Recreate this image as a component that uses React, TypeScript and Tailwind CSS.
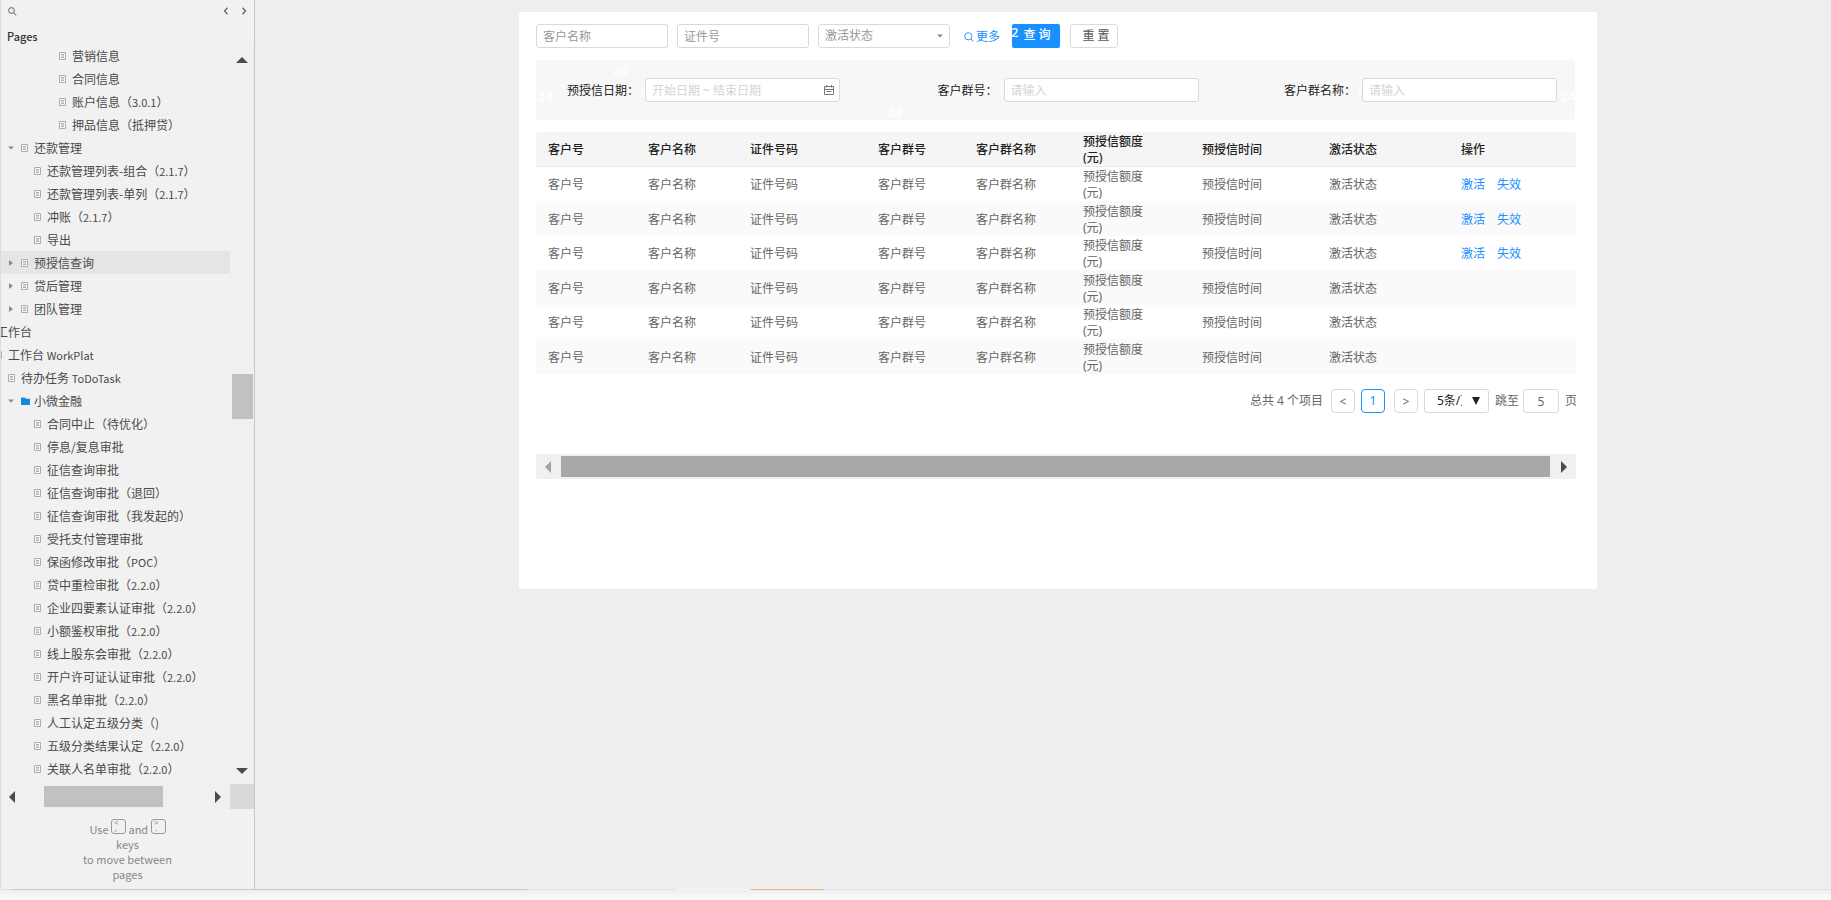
import { clsx } from "clsx";
import { ReactNode } from "react";

type TreeItem = {
  label: string;
  version?: string;
  indent: string;
  arrow?: "open" | "closed";
  icon?: "page" | "folder" | "none";
  active?: boolean;
};

const DEEP = "pl-[58px]";
const CHILD = "pl-[33px]";
const PARENT = "pl-[6px]";

const treeItems: TreeItem[] = [
  { label: "营销信息", indent: DEEP },
  { label: "合同信息", indent: DEEP },
  { label: "账户信息（3.0.1）", indent: DEEP },
  { label: "押品信息（抵押贷）", indent: DEEP },
  { label: "还款管理", indent: PARENT, arrow: "open" },
  { label: "还款管理列表-组合（2.1.7）", indent: CHILD },
  { label: "还款管理列表-单列（2.1.7）", indent: CHILD },
  { label: "冲账（2.1.7）", indent: CHILD },
  { label: "导出", indent: CHILD },
  { label: "预授信查询", indent: PARENT, arrow: "closed", active: true },
  { label: "贷后管理", indent: PARENT, arrow: "closed" },
  { label: "团队管理", indent: PARENT, arrow: "closed" },
  { label: "工作台", indent: "-ml-[5px]", icon: "none" },
  { label: "工作台 WorkPlat", indent: "-ml-[6px]" },
  { label: "待办任务 ToDoTask", indent: "pl-[7px]" },
  { label: "小微金融", indent: PARENT, arrow: "open", icon: "folder" },
  { label: "合同中止（待优化）", indent: CHILD },
  { label: "停息/复息审批", indent: CHILD },
  { label: "征信查询审批", indent: CHILD },
  { label: "征信查询审批（退回）", indent: CHILD },
  { label: "征信查询审批（我发起的）", indent: CHILD },
  { label: "受托支付管理审批", indent: CHILD },
  { label: "保函修改审批（POC）", indent: CHILD },
  { label: "贷中重检审批（2.2.0）", indent: CHILD },
  { label: "企业四要素认证审批（2.2.0）", indent: CHILD },
  { label: "小额鉴权审批（2.2.0）", indent: CHILD },
  { label: "线上股东会审批（2.2.0）", indent: CHILD },
  { label: "开户许可证认证审批（2.2.0）", indent: CHILD },
  { label: "黑名单审批（2.2.0）", indent: CHILD },
  { label: "人工认定五级分类（)", indent: CHILD },
  { label: "五级分类结果认定（2.2.0）", indent: CHILD },
  { label: "关联人名单审批（2.2.0）", indent: CHILD },
];

const columns = [
  { label: "客户号", width: "w-[100px]" },
  { label: "客户名称", width: "w-[102px]" },
  { label: "证件号码", width: "w-[128px]" },
  { label: "客户群号", width: "w-[98px]" },
  { label: "客户群名称", width: "w-[107px]" },
  { label: "预授信额度(元)", width: "w-[119px]" },
  { label: "预授信时间", width: "w-[127px]" },
  { label: "激活状态", width: "w-[132px]" },
];

const rows = [true, true, true, false, false, false];

const arrowPaths = {
  up: "M0 9 6 3l6 6z",
  down: "M0 3h12L6 9z",
  left: "M9 0v12L3 6z",
  right: "M3 0v12l6-6z",
};

function Arrow({ dir, className }: { dir: keyof typeof arrowPaths; className?: string }) {
  return (
    <svg viewBox="0 0 12 12" className={clsx("size-3 shrink-0", className)} fill="currentColor">
      <path d={arrowPaths[dir]} />
    </svg>
  );
}

function PageIcon() {
  return (
    <svg viewBox="0 0 7 8" className="h-2 w-[7px] shrink-0">
      <path d="M.5.5h6v7h-6z" fill="#f7f7f7" stroke="#adadad" />
      <path d="M2 2.5h3M2 4h3M2 5.5h3" stroke="#a0a0a0" strokeWidth="0.8" />
    </svg>
  );
}

function FolderIcon() {
  return (
    <svg viewBox="0 0 9 8" className="h-2 w-[9px] shrink-0" fill="#1489dc">
      <path d="M0 .5h4l1 1.2h4V8H0z" />
    </svg>
  );
}

// Latin runs are set one size down so they sit level with the Chinese text
function Label({ text }: { text: string }) {
  return text.split(/([A-Za-z0-9.]+)/).map((part, i) =>
    i % 2 ? (
      <span key={i} className="text-[11px]">
        {part}
      </span>
    ) : (
      part
    )
  );
}

function TreeRow({ item }: { item: TreeItem }) {
  return (
    <li className={clsx("overflow-hidden", item.active && "bg-[#e5e5e5]")}>
      <a href="#" className={clsx("flex h-[23px] items-center whitespace-nowrap", item.indent)}>
        {item.arrow && (
          <Arrow
            dir={item.arrow === "open" ? "down" : "right"}
            className={clsx("mr-[6px] size-2! text-[#8a8a8a]", item.arrow === "open" ? "scale-75" : "scale-y-75")}
          />
        )}
        {item.icon === "folder" && <FolderIcon />}
        {!item.icon && <PageIcon />}
        <span className={item.icon === "folder" ? "ml-1" : item.icon ? "" : "ml-[6px]"}>
          <Label text={item.label} />
        </span>
      </a>
    </li>
  );
}

function Key({ top, bottom }: { top: string; bottom: string }) {
  return (
    <kbd className="mb-[3px] inline-flex h-[15px] w-[15px] flex-col rounded-[3px] border border-[#999] pl-[2px] text-left align-bottom font-['Liberation_Mono',monospace] text-[8px] leading-[6px]">
      <span>{top}</span>
      <span>{bottom}</span>
    </kbd>
  );
}

function Sidebar() {
  return (
    <aside className="flex w-[255px] shrink-0 flex-col border-x border-[#c8c8c8] border-l-[#dcdcdc] bg-[#f1f1f1] font-['Noto_Sans_CJK_SC',sans-serif] text-xs text-[#4a4a4a]">
      <div className="flex h-[22px] items-center justify-between pr-[6px] pl-[7px] text-[#777]">
        <button aria-label="Search">
          <svg viewBox="0 0 9 9" className="size-[9px]" fill="none" stroke="#888" strokeWidth="1.2">
            <circle cx="3.5" cy="3.5" r="2.8" />
            <path d="m5.7 5.7 2.6 2.6" />
          </svg>
        </button>
        <div className="flex gap-[10px]">
          <button aria-label="Previous page">
            <svg viewBox="0 0 8 8" className="size-2" fill="none" stroke="#666" strokeWidth="1.3">
              <path d="M5.5.8 2.5 4l3 3.2" />
            </svg>
          </button>
          <button aria-label="Next page">
            <svg viewBox="0 0 8 8" className="size-2" fill="none" stroke="#666" strokeWidth="1.3">
              <path d="m2.5.8 3 3.2-3 3.2" />
            </svg>
          </button>
        </div>
      </div>
      <h2 className="h-[22px] pl-[6px] text-[11px] leading-7 font-medium text-[#333]">Pages</h2>
      <div className="flex">
        <ul className="min-w-0 flex-1 pb-1">
          {treeItems.map((item) => (
            <TreeRow key={item.label} item={item} />
          ))}
        </ul>
        <div className="flex w-6 flex-col items-center justify-between bg-[#f0f0f0] pt-[10px] pb-[7px]">
          <button aria-label="Scroll up">
            <Arrow dir="up" />
          </button>
          <div className="-mt-[38px] h-[45px] w-[21px] bg-[#c1c1c1]" />
          <button aria-label="Scroll down">
            <Arrow dir="down" />
          </button>
        </div>
      </div>
      <div className="flex h-[25px] bg-[#f0f0f0]">
        <div className="flex flex-1 items-center justify-between pr-[6px] pl-[5px]">
          <button aria-label="Scroll left">
            <Arrow dir="left" />
          </button>
          <div className="mr-[23px] h-[21px] w-[119px] bg-[#c1c1c1]" />
          <button aria-label="Scroll right">
            <Arrow dir="right" />
          </button>
        </div>
        <div className="w-6 bg-[#dadada]" />
      </div>
      <p className="pt-[10px] text-center text-[11px] leading-[15px] text-[#888]">
        Use <Key top="<" bottom="," /> and <Key top=">" bottom="." />
        <br />
        keys
        <br />
        to move between
        <br />
        pages
      </p>
    </aside>
  );
}

// White spacing numbers left over on the canvas
function Spacing({ className, children }: { className: string; children: ReactNode }) {
  return (
    <span aria-hidden className={clsx("absolute text-[13px] leading-4 font-medium text-white", className)}>
      {children}
    </span>
  );
}

const box = "h-6 rounded-[3px] border border-[#d9d9d9] bg-white";

function Toolbar() {
  return (
    <div className="flex items-center">
      <input aria-label="客户名称" placeholder="客户名称" className={clsx(box, "w-[132px] px-[6px] placeholder:text-[#999]")} />
      <input aria-label="证件号" placeholder="证件号" className={clsx(box, "ml-[9px] w-[132px] px-[6px] placeholder:text-[#999]")} />
      <div className="relative ml-[9px]">
        <select aria-label="激活状态" className={clsx(box, "w-[132px] appearance-none px-[6px] text-[#999]")}>
          <option>激活状态</option>
        </select>
        <Arrow dir="down" className="pointer-events-none absolute top-[9px] right-[7px] size-[6px]! text-[#888]" />
      </div>
      <a href="#" className="ml-[14px] flex items-center gap-[2px] pt-[2px] text-[#1890ff]">
        <svg viewBox="0 0 10 10" className="size-[10px]" fill="none" stroke="currentColor" strokeWidth="0.9">
          <circle cx="4.3" cy="4.3" r="3.6" />
          <path d="m7 7 2.5 2.5" />
        </svg>
        更多
      </a>
      <button className="relative ml-3 h-6 w-12 rounded-[2px] bg-[#1890ff] pb-[2px] pl-[2px] font-medium text-white">
        <Spacing className="top-0 -left-px">2</Spacing>
        查 询
      </button>
      <button className={clsx(box, "ml-[10px] w-12 pl-1 text-[#555]")}>重 置</button>
    </div>
  );
}

function Field({ id, label, placeholder, children }: { id: string; label: string; placeholder: string; children?: ReactNode }) {
  return (
    <div className="relative flex items-center gap-[6px]">
      <label htmlFor={id} className="w-[72px] pt-[2px] text-right whitespace-nowrap text-[#222]">
        {label}：
      </label>
      <Spacing className="top-1 left-[74px]">8</Spacing>
      <input id={id} placeholder={placeholder} className={clsx(box, "relative w-[195px] px-[6px] placeholder:text-[#d4d4d4]")} />
      {children}
    </div>
  );
}

function Filters() {
  return (
    <div className="relative mt-3 mr-px flex h-[60px] items-center justify-between rounded-[3px] bg-[#f7f7f7] pr-[18px] pl-[31px]">
      <Spacing className="top-[2px] left-[77px]">24</Spacing>
      <Spacing className="top-7 left-[2px]">24</Spacing>
      <Spacing className="top-11 left-[351px]">24</Spacing>
      <Spacing className="top-7 right-0">24</Spacing>
      <Field id="credit-date" label="预授信日期" placeholder="开始日期 ~ 结束日期">
        <svg viewBox="0 0 10 10" className="absolute right-[6px] size-[10px]" fill="none" stroke="#777">
          <path d="M.5 1.5h9v8h-9zM.5 4.5h9M2.5 0v2.5M7.5 0v2.5M2.5 6.5h5" />
        </svg>
      </Field>
      <Field id="group-no" label="客户群号" placeholder="请输入" />
      <Field id="group-name" label="客户群名称" placeholder="请输入" />
    </div>
  );
}

function CreditTable() {
  return (
    <table className="mt-3 w-full table-fixed border-separate border-spacing-0 overflow-hidden rounded-t-[3px] text-left leading-4">
      <thead className="bg-[#f5f5f5] text-[#222]">
        <tr className="h-[35px]">
          {columns.map((col) => (
            <th key={col.label} className={clsx("border-b border-[#e8e8e8] pt-[2px] pb-0 pr-[46px] pl-3 font-medium", col.width, col.label.length < 7 && "pr-0! whitespace-nowrap")}>
              {col.label}
            </th>
          ))}
          <th className="border-b border-[#e8e8e8] pt-[2px] pl-3 font-medium">操作</th>
        </tr>
      </thead>
      <tbody className="text-[#666]">
        {rows.map((hasActions, i) => (
          <tr key={i} className="h-[34px] even:h-[35px] even:bg-[#fafafa]">
            {columns.map((col) => (
              <td key={col.label} className={clsx("pt-[2px] pb-0 pr-[46px] pl-3", col.label.length < 7 && "pr-0! whitespace-nowrap")}>
                {col.label}
              </td>
            ))}
            <td className="pt-[2px] pl-3 text-[#1890ff]">
              {hasActions && (
                <div className="flex gap-3">
                  <a href="#">激活</a>
                  <a href="#">失效</a>
                </div>
              )}
            </td>
          </tr>
        ))}
      </tbody>
    </table>
  );
}

const pager = "h-6 w-6 rounded-[4px] border bg-white";

function Pagination() {
  return (
    <div className="mt-[15px] flex items-center justify-end text-[#666]">
      <span className="mr-2">总共 4 个项目</span>
      <button className={clsx(pager, "border-[#d9d9d9] pt-[2px]")}>&lt;</button>
      <button className={clsx(pager, "ml-[6px] border-[#1890ff] text-[#1890ff]")}>1</button>
      <button className={clsx(pager, "ml-[9px] border-[#d9d9d9] pt-[2px]")}>&gt;</button>
      <div className="relative ml-[6px]">
        <select aria-label="每页条数" className={clsx(box, "w-[65px] appearance-none pr-[26px] pl-3 text-[#222]")}>
          <option>5条/页</option>
        </select>
        <svg viewBox="0 0 8 8" className="pointer-events-none absolute top-2 right-[9px] size-2" fill="#222">
          <path d="M0 0h8L4 8z" />
        </svg>
      </div>
      <label htmlFor="jump" className="ml-[6px]">
        跳至
      </label>
      <input id="jump" defaultValue="5" className={clsx(box, "mr-[6px] ml-1 w-9 text-center")} />
      <span className="w-[11px] overflow-hidden">页</span>
    </div>
  );
}

function HorizontalScroll() {
  return (
    <div className="mt-[41px] flex h-[25px] items-center bg-[#f0f0f0]">
      <button aria-label="Scroll left" className="flex w-[25px] pl-[6px] text-[#a3a3a3]">
        <Arrow dir="left" />
      </button>
      <div className="h-[21px] flex-1 bg-[#a8a8a8]" />
      <button aria-label="Scroll right" className="flex w-[26px] pl-2 text-[#4a4a4a]">
        <Arrow dir="right" />
      </button>
    </div>
  );
}

export default function App() {
  return (
    <div className="flex min-h-screen flex-col bg-[#eeeeee]">
      <div className="flex flex-1">
        <Sidebar />
        <main className="min-w-0 flex-1 pt-3 pr-[234px] pl-[264px] font-['Noto_Sans','Noto_Sans_CJK_SC',sans-serif] text-xs">
          <section className="rounded-[2px] bg-white pt-3 pr-[21px] pb-[110px] pl-[17px]">
            <Toolbar />
            <Filters />
            <CreditTable />
            <Pagination />
            <HorizontalScroll />
          </section>
        </main>
      </div>
      <footer>
        <div className="flex h-px bg-[#dde5ea]">
          <div className="ml-[11px] w-[516px] bg-[#c8c8c8]" />
          <div className="ml-[149px] w-[73px] bg-[#f3f5f7]" />
          <div className="ml-[2px] w-[73px] bg-[#f3b27c]" />
        </div>
        <div className="h-[10px] bg-linear-to-b from-[#eceef0] to-[#fcfdff]" />
      </footer>
    </div>
  );
}
